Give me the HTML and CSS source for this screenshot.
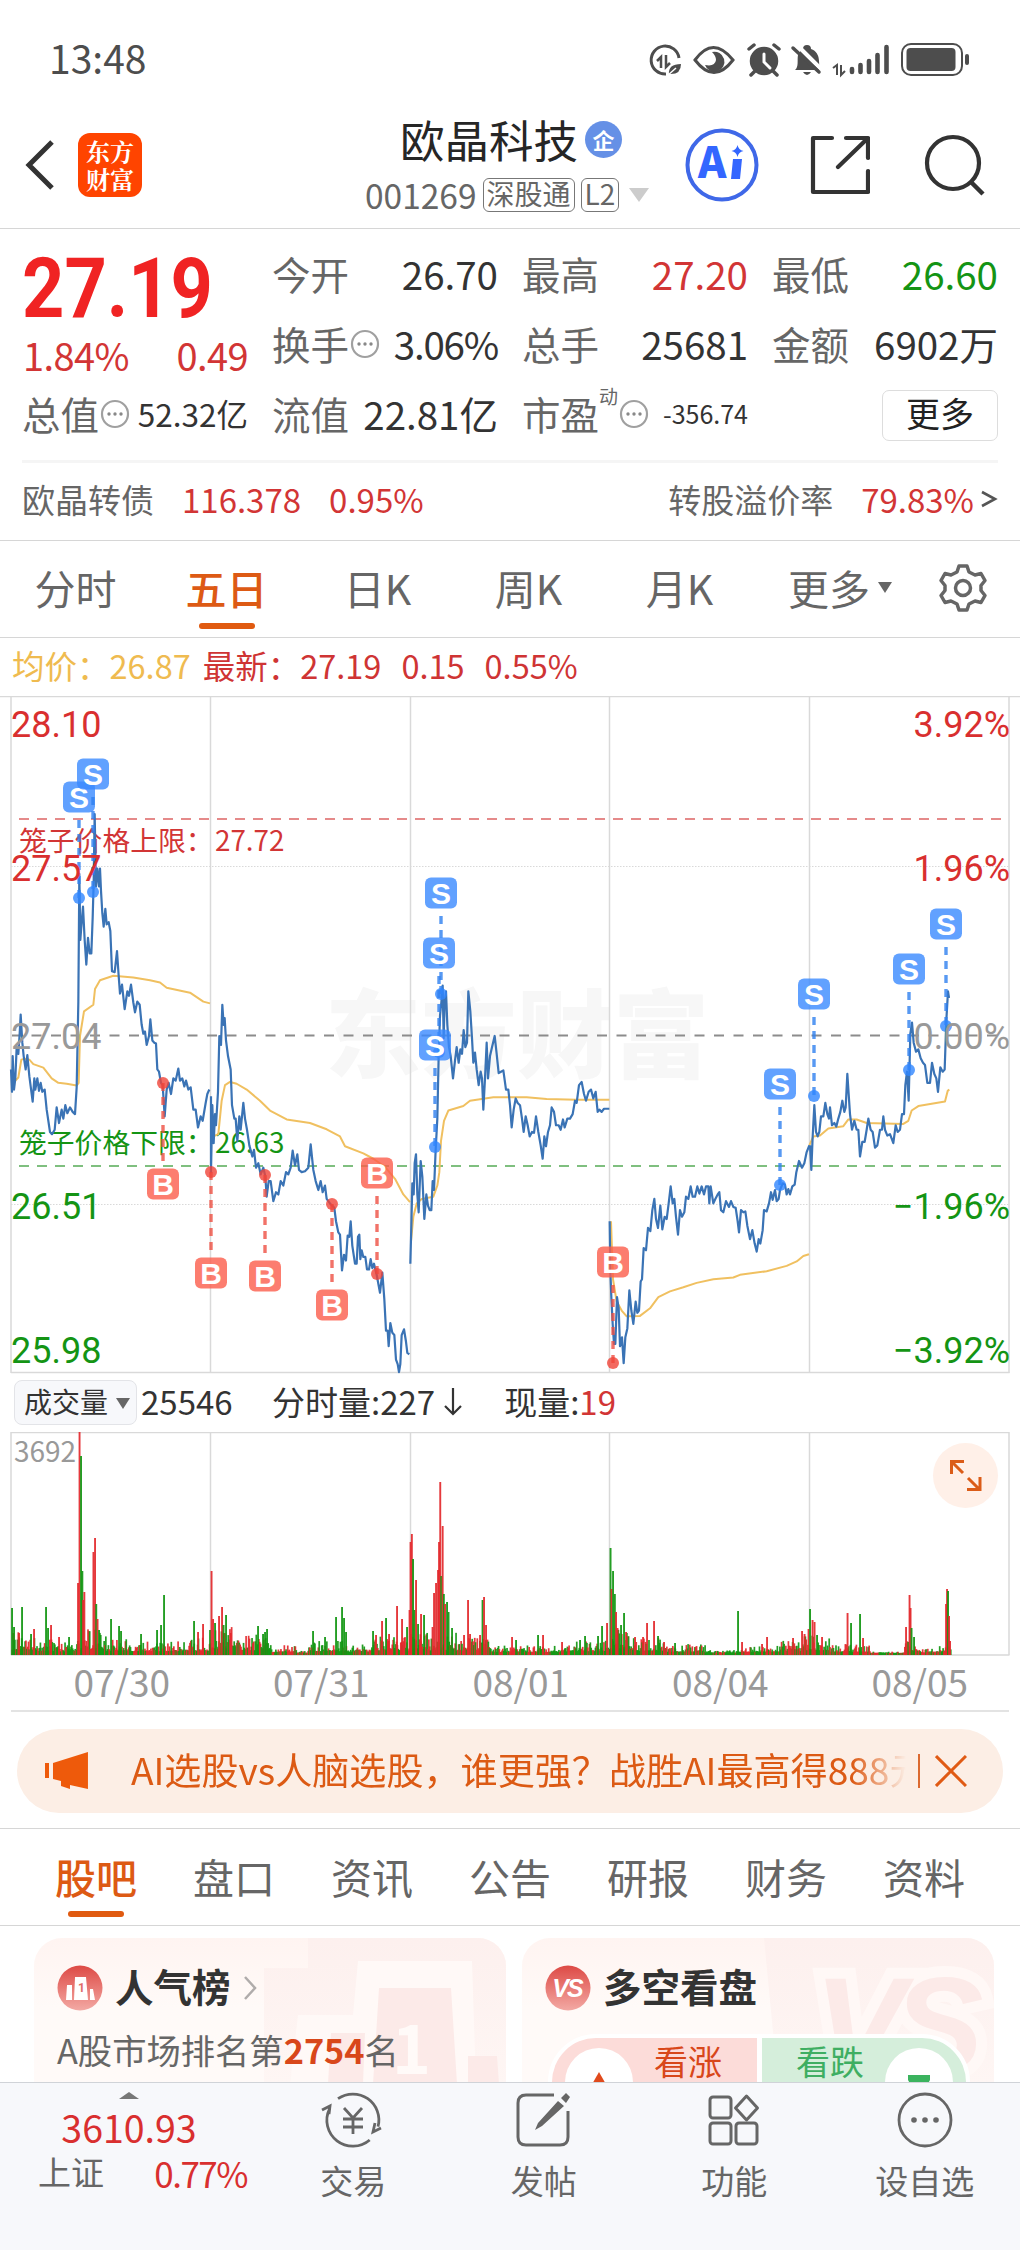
FILE: index.html
```html
<!DOCTYPE html>
<html lang="zh-CN">
<head>
<meta charset="UTF-8">
<meta name="viewport" content="width=device-width, initial-scale=1.0">
<title>欧晶科技 001269</title>
<link rel="stylesheet" href="styles.css">
</head>
<body>
<div class="status">
    <span class="clock">13:48</span>
    <svg class="status-icons" width="330" height="40" viewBox="0 0 330 40">
        <g fill="none" stroke="#4d4d4d" stroke-width="3">
            <path d="M37 18a14 14 0 1 0-13 16"/>
            <path d="M15 21l4-4v11M24 15v12l4-4" stroke-width="2.500"/>
            <path d="M53 20q18-25 38 0q-19 25-38 0z"/>
        </g>
        <path d="M27 34q-1-10 12-10q0 11-12 10z" fill="#4d4d4d"/>
        <path d="M25 36l9-8" stroke="#fff" stroke-width="1.500"/>
        <path d="M70 12a10 10 0 1 1-7 13q10 2 11-5q0-4-4-8z" fill="#4d4d4d"/>
        <g stroke="#4d4d4d" stroke-width="3.500" stroke-linecap="round">
            <circle cx="122" cy="21" r="12.500" fill="#4d4d4d"/>
            <path d="M107 9l5-4M132 5l5 4M113 31l-4 4M131 31l4 4"/>
            <path d="M122 14v8l6 6" stroke="#fff" fill="none" stroke-width="3"/>
        </g>
        <path d="M153 30c4-3 2-10 3-15a10 10 0 0 1 5-6a4 4 0 0 1 8 0c11 4 7 16 9 21zM161 32h8q-4 6-8 0z" fill="#4d4d4d"/>
        <path d="M153 3l28 28" stroke="#fff" stroke-width="4"/>
        <path d="M151 8l26 24" stroke="#4d4d4d" stroke-width="3.500" stroke-linecap="round"/>
        <path d="M191 28l4-3v10M199 25v10l4-4" fill="none" stroke="#4d4d4d" stroke-width="2"/>
        <g stroke="#4d4d4d" stroke-width="4.600" stroke-linecap="round">
            <path d="M210 29v3M218.500 25v7M227 21v11M235.500 15v17M244.500 7v25"/>
        </g>
        <rect x="260" y="4" width="60" height="31" rx="9" fill="none" stroke="#4d4d4d" stroke-width="2"/>
        <rect x="264.500" y="8" width="49" height="23" rx="4" fill="#4d4d4d"/>
        <rect x="323" y="14" width="4" height="11" rx="2" fill="#4d4d4d"/>
    </svg>
</div>

<header class="header">
    <svg class="back" width="30" height="52" viewBox="0 0 30 52"><path d="M27 3L4 26l23 23" fill="none" stroke="#333" stroke-width="5"/></svg>
    <div class="logo"><span>东方</span><span>财富</span></div>
    <div class="title">
        <div class="name">欧晶科技<span class="corp">企</span></div>
        <div class="code">001269<span class="tag">深股通</span><span class="tag">L2</span><i class="drop"></i></div>
    </div>
    <svg class="ai" width="74" height="74" viewBox="0 0 74 74">
        <circle cx="37" cy="37" r="34.500" fill="none" stroke="#3f68e8" stroke-width="4"/>
        <text x="13" y="50" class="ai-text">A</text>
        <path d="M48 31h9l-2 20h-9zM52.500 17q1 5 6 6q-5 1-6 6q-1-5-6-6q5-1 6-6z" fill="#3366ff"/>
    </svg>
    <svg class="share" width="60" height="60" viewBox="0 0 60 60"><path d="M22 3H3v54h55V36M36 3h22v20M57 4L28 32" fill="none" stroke="#333" stroke-width="4.200" stroke-linecap="round" stroke-linejoin="round"/></svg>
    <svg class="search" width="62" height="62" viewBox="0 0 62 62"><circle cx="29" cy="29" r="26" fill="none" stroke="#333" stroke-width="4.200"/><path d="M47 48l12 12" stroke="#333" stroke-width="4.500"/></svg>
</header>

<section class="quote">
    <div class="quote-top">
        <div class="last">
            <div class="price"><span>27.19</span></div>
            <div class="change"><span>1.84%</span><span>0.49</span></div>
        </div>
        <dl class="stats">
            <div><dt>今开</dt><dd>26.70</dd></div>
            <div><dt>最高</dt><dd class="up">27.20</dd></div>
            <div><dt>最低</dt><dd class="down">26.60</dd></div>
            <div><dt>换手<svg class="more-dot" width="30" height="30" viewBox="0 0 30 30"><circle cx="15" cy="15" r="13"/><path d="M9 15h.01M15 15h.01M21 15h.01"/></svg></dt><dd class="pct">3.06%</dd></div>
            <div><dt>总手</dt><dd>25681</dd></div>
            <div><dt>金额</dt><dd>6902万</dd></div>
        </dl>
    </div>
    <dl class="stats stats-row">
        <div><dt>总值<svg class="more-dot" width="30" height="30" viewBox="0 0 30 30"><circle cx="15" cy="15" r="13"/><path d="M9 15h.01M15 15h.01M21 15h.01"/></svg></dt><dd class="mid">52.32亿</dd></div>
        <div><dt>流值</dt><dd>22.81亿</dd></div>
        <div><dt>市盈<sup>动</sup><svg class="more-dot" width="30" height="30" viewBox="0 0 30 30"><circle cx="15" cy="15" r="13"/><path d="M9 15h.01M15 15h.01M21 15h.01"/></svg></dt><dd class="small">-356.74</dd></div>
        <div class="end"><button class="more">更多</button></div>
    </dl>
    <div class="bond">
        <span>欧晶转债</span><b>116.378</b><b>0.95%</b>
        <span class="premium">转股溢价率</span><b>79.83%</b>
        <svg width="18" height="24" viewBox="0 0 18 24"><path d="M2 5l13 7-13 7" fill="none" stroke="#555" stroke-width="2.600"/></svg>
    </div>
</section>

<nav class="periods">
    <span>分时</span><span class="on">五日</span><span>日K</span><span>周K</span><span>月K</span><span class="wide">更多<i></i></span>
    <svg width="50" height="50" viewBox="0 0 50 50"><g fill="none" stroke="#666" stroke-width="3.500" stroke-linejoin="round"><path d="M21 3h8l2 6 6 3 6-1.500 4 7-4 5v5l4 5-4 7-6-1.500-6 3-2 6h-8l-2-6-6-3-6 1.500-4-7 4-5v-5l-4-5 4-7 6 1.500 6-3z"/><circle cx="25" cy="25" r="7.500"/></g></svg>
</nav>

<div class="legend"><span class="avg">均价：</span><span class="avg v1">26.87</span><span class="v2">最新：</span><span class="v3">27.19</span><span class="v4">0.15</span><span>0.55%</span></div>

<svg class="chart" width="1020" height="678" viewBox="0 696 1020 678">
    <text x="517" y="1070" class="watermark">东方财富</text>
    <g class="frame">
        <path d="M0 696.500H1020M11 1372.500H1009.500"/>
        <path d="M11 697V1373M210.500 697V1373M410.500 697V1373M609.500 697V1373M809.500 697V1373M1009 697V1373"/>
        <path d="M11 866.500H1009M11 1204.500H1009" class="dotted"/>
    </g>
    <path d="M19 819H1002" stroke="#e58a8a" stroke-width="2" stroke-dasharray="10 8"/>
    <path d="M19 1166H1002" stroke="#7fbf7f" stroke-width="2" stroke-dasharray="10 8"/>
    <path d="M12 1035.500H1002" stroke="#8c8c8c" stroke-width="2" stroke-dasharray="10 9.500"/>
    <g class="cage">
        <text x="19" y="851" fill="#d23535">笼子价格上限：</text><text x="215" y="851" fill="#d23535">27.72</text>
        <text x="19" y="1153" fill="#149414">笼子价格下限：</text><text x="215" y="1153" fill="#149414">26.63</text>
    </g>
    <svg x="0" y="690" width="1020" height="700" viewBox="0 0 3060 1568" preserveAspectRatio="none">
        <g class="avg-line">
            <polyline points="45,876 55,868 64,828 75,826 88,828 100,838 130,846 155,870 175,880 200,882 230,886 236,880 240,775 252,720 280,705 285,670 300,650 340,640 400,644 450,650 480,655 500,667 570,678 610,698 630,702"/>
            <polyline points="640,1000 655,995 665,920 675,885 690,878 710,882 740,895 780,920 810,942 860,962 930,970 980,984 1020,1000 1035,1022 1090,1038 1120,1050 1155,1068 1185,1095 1210,1130 1230,1147"/>
            <polyline points="1233,1235 1240,1180 1250,1150 1265,1140 1300,1135 1312,1110 1318,1080 1323,1010 1332,965 1345,942 1390,932 1410,920 1480,912 1580,912 1640,916 1730,918 1828,918"/>
            <polyline points="1833,1190 1839,1320 1850,1370 1865,1390 1880,1403 1920,1402 1950,1385 1975,1360 2010,1347 2050,1338 2090,1328 2140,1320 2200,1316 2220,1310 2300,1302 2360,1290 2390,1280 2410,1268 2427,1264"/>
            <polyline points="2428,1020 2440,1000 2460,998 2485,982 2530,977 2545,962 2570,962 2600,970 2710,972 2725,965 2735,942 2755,932 2835,922 2843,898 2848,895"/>
        </g>
        <g class="price-line">
            <polyline points="33,850 36,900 38,820 42,895 46,870 50,800 55,815 59,770 62,727 67,790 71,820 77,850 82,818 88,865 98,922 103,870 106,895 112,870 117,898 122,880 127,900 134,895 140,940 150,990 156,995 164,985 170,935 177,970 185,940 190,960 196,930 202,948 210,935 218,945 225,950 230,890 235,700 238,412 241,560 245,520 249,485 254,560 259,615 264,555 269,590 274,590 278,510 281,430 284,278 288,440 292,400 297,440 300,400 303,450 307,500 311,530 316,490 320,525 326,520 331,540 336,630 344,632 351,585 356,640 360,680 366,660 374,715 382,675 387,685 393,660 400,700 405,722 412,698 419,705 425,750 430,770 435,765 440,795 447,775 451,738 457,785 463,790 468,792 472,850 477,855 483,880 488,885 494,955 500,895 506,880 513,905 520,870 527,875 535,848 540,875 547,870 553,888 558,875 565,895 572,890 580,940 587,940 594,980 602,955 608,965 617,925 622,905 628,895"/>
            <polyline points="633,910 633,1080 637,930 641,1015 645,950 648,975 654,900 658,775 663,795 667,705 671,750 674,735 678,785 684,820 692,850 696,930 703,960 707,960 712,1010 718,955 722,985 730,925 735,960 741,985 748,1020 757,1045 762,1030 768,1070 775,1060 782,1085 790,1070 796,1090 800,1135 806,1100 812,1100 820,1145 828,1125 835,1130 842,1100 850,1110 858,1080 865,1085 872,1070 878,1032 885,1065 892,1040 897,1075 905,1080 915,1078 925,1070 932,1018 940,1075 947,1100 955,1120 962,1100 968,1125 975,1110 980,1140 990,1150 996,1155 1003,1160 1008,1190 1015,1215 1020,1220 1026,1300 1032,1265 1038,1278 1043,1222 1048,1225 1052,1190 1057,1245 1065,1285 1070,1285 1074,1225 1078,1220 1081,1275 1085,1255 1090,1270 1096,1270 1101,1298 1107,1298 1112,1275 1117,1295 1122,1285 1130,1310 1140,1350 1147,1305 1153,1365 1158,1435 1163,1435 1166,1470 1171,1418 1177,1440 1183,1445 1188,1500 1193,1510 1197,1528 1201,1510 1205,1445 1212,1432 1218,1460 1222,1485 1228,1488"/>
            <polyline points="1231,1285 1234,1200 1237,1105 1241,1130 1244,1060 1248,1040 1252,1130 1256,1170 1262,1055 1267,1090 1273,1185 1279,1130 1284,1155 1289,1165 1294,1165 1298,1100 1302,1120 1307,1030 1312,960 1316,820 1320,730 1324,700 1328,662 1331,780 1334,700 1338,675 1342,750 1347,800 1352,820 1359,870 1365,830 1370,800 1376,835 1381,805 1386,815 1391,762 1396,800 1401,790 1405,675 1411,720 1416,780 1420,835 1425,812 1430,850 1436,885 1442,855 1446,870 1450,940 1455,870 1460,790 1464,870 1470,820 1476,800 1484,775 1490,815 1496,858 1503,855 1510,852 1518,895 1525,895 1530,930 1535,980 1541,940 1547,915 1553,925 1560,930 1566,960 1571,990 1577,955 1583,975 1589,1000 1596,990 1602,992 1608,955 1615,990 1622,1020 1628,1050 1633,1000 1638,1022 1644,990 1650,975 1655,935 1662,945 1668,975 1676,975 1682,985 1689,962 1694,980 1702,960 1710,960 1718,950 1725,920 1730,925 1737,885 1745,878 1752,905 1758,920 1766,900 1773,895 1780,915 1787,900 1793,945 1798,940 1805,945 1812,938 1828,938"/>
            <polyline points="1829,1190 1831,1300 1834,1360 1838,1420 1842,1465 1846,1465 1851,1360 1856,1385 1860,1470 1866,1450 1871,1508 1876,1450 1882,1430 1888,1345 1894,1390 1900,1420 1907,1370 1912,1395 1917,1390 1922,1325 1926,1320 1931,1250 1938,1255 1944,1205 1951,1212 1957,1165 1963,1140 1968,1185 1974,1205 1981,1155 1987,1208 1994,1180 2000,1185 2006,1150 2012,1112 2018,1150 2023,1140 2028,1180 2034,1220 2040,1165 2046,1180 2053,1170 2058,1135 2065,1140 2072,1112 2078,1135 2085,1135 2092,1112 2098,1128 2105,1112 2112,1130 2118,1112 2125,1112 2128,1150 2132,1112 2140,1150 2146,1140 2153,1130 2158,1125 2163,1165 2170,1170 2178,1145 2187,1158 2193,1145 2200,1158 2207,1160 2213,1190 2217,1215 2223,1165 2230,1170 2236,1168 2242,1200 2250,1230 2257,1210 2264,1240 2270,1258 2276,1230 2281,1240 2288,1210 2292,1165 2300,1168 2307,1150 2313,1125 2318,1142 2325,1120 2330,1145 2336,1140 2340,1120 2348,1105 2355,1108 2360,1130 2365,1118 2370,1130 2377,1112 2384,1108 2389,1080 2397,1055 2406,1070 2413,1060 2420,1035 2428,1020"/>
            <polyline points="2430,1020 2434,1075 2438,1000 2443,930 2448,990 2453,1000 2458,990 2463,955 2470,955 2476,925 2482,950 2487,960 2490,935 2496,975 2503,970 2509,978 2515,960 2521,945 2527,920 2533,945 2537,935 2542,860 2546,905 2550,950 2556,985 2563,965 2570,985 2575,985 2580,1045 2587,1012 2594,1012 2600,985 2605,960 2612,985 2618,990 2625,1025 2632,1020 2640,985 2646,985 2650,955 2655,985 2662,998 2670,995 2680,1015 2687,975 2693,990 2700,985 2706,950 2712,950 2716,885 2721,855 2726,920 2731,770 2736,745 2741,790 2748,810 2755,805 2762,825 2769,835 2775,840 2782,880 2790,880 2796,835 2803,860 2809,870 2814,900 2821,845 2828,855 2834,850 2839,740 2844,675 2847,690"/>
        </g>
    </svg>
    <g id="marks"></g>
    <g class="axis">
        <text x="11" y="737" class="red">28.10</text><text x="11" y="881" class="red">27.57</text><text x="11" y="1049" class="grey">27.04</text><text x="11" y="1219" class="green">26.51</text><text x="11" y="1363" class="green">25.98</text>
        <g text-anchor="end"><text x="1010" y="737" class="red">3.92%</text><text x="1010" y="881" class="red">1.96%</text><text x="1010" y="1049" class="grey">0.00%</text><text x="1010" y="1219" class="green">−1.96%</text><text x="1010" y="1363" class="green">−3.92%</text></g>
    </g>
</svg>

<div class="vol-head">
    <span class="vol-select">成交量<i></i></span><span class="total">25546</span><span class="minute">分时量:227</span>
    <svg width="20" height="30" viewBox="0 0 20 30"><path d="M10 1v26M2 19l8 8 8-8" fill="none" stroke="#333" stroke-width="2.200"/></svg>
    <span>现量:<em>19</em></span>
</div>
<svg class="volume" width="1020" height="224" viewBox="0 1432 1020 224">
    <g class="frame">
        <path d="M11 1432.500H1009M11 1655H1009.500"/>
        <path d="M11 1432V1655M210.500 1432V1655M410.500 1432V1655M609.500 1432V1655M809.500 1432V1655M1009 1432V1655"/>
    </g>
    <text x="14" y="1462" class="max">3692</text>
    <g id="bars"></g>
    <circle cx="965.500" cy="1475.500" r="32.500" fill="#fff0e8"/>
    <path d="M963 1473l-11.500-11.500M951.500 1474v-12.500h12.500M968 1478l11.500 11.500M980 1477v12.500h-13" fill="none" stroke="#db5c18" stroke-width="3"/>
</svg>
<div class="dates"><span>07/30</span><span>07/31</span><span>08/01</span><span>08/04</span><span>08/05</span></div>

<div class="notice">
    <svg width="44" height="40" viewBox="0 0 44 40"><path d="M0 12h4v15H0zM8 12L43 1v37l-18-4v4l-9-3v-5l-8-2z" fill="#ee5a0b"/></svg>
    <div class="notice-text">AI选股vs人脑选股，谁更强？战胜AI最高得888元</div>
    <i></i>
    <svg class="close" width="32" height="32" viewBox="0 0 32 32"><path d="M1 1l30 30M31 1L1 31" stroke="#e05a14" stroke-width="3"/></svg>
</div>

<nav class="tabs"><span class="on">股吧</span><span>盘口</span><span>资讯</span><span>公告</span><span>研报</span><span>财务</span><span>资料</span></nav>

<div class="cards">
    <div class="card">
        <svg class="card-bg" width="472" height="146" viewBox="0 0 472 146">
            <defs><linearGradient id="shade" gradientUnits="userSpaceOnUse" x1="0" y1="0" x2="0" y2="146"><stop offset="0" stop-color="#fdf0ee"/><stop offset="1" stop-color="#fef6f4"/></linearGradient></defs>
            <path d="M230 30h44V0h198v146H230z" fill="url(#shade)"/>
            <path d="M264 77h55l5-54h114l4 123H256z" fill="#fff9f7"/>
            <path d="M345 50h72l6 96H339zM297 95h34l-2 51h-35zM434 118h29l2 28h-31z" fill="#fceae8"/>
            <text x="358" y="136" class="card-one">1</text>
        </svg>
        <h2>
            <svg width="46" height="46" viewBox="0 0 46 46"><defs><linearGradient id="red" x1="0" y1="0" x2="0" y2="1"><stop offset="0" stop-color="#dd4a45"/><stop offset="1" stop-color="#f3a9a4"/></linearGradient></defs><circle cx="23" cy="23" r="22.500" fill="url(#red)"/><path d="M10 20h5v15H9zM18 12h11l2 23H17zM33 24h3l2 11h-5z" fill="#fff"/><text x="21" y="27" class="icon-one">1</text></svg>
            <span>人气榜</span>
            <svg class="chev" width="14" height="24" viewBox="0 0 14 24"><path d="M2 1l10 11L2 23" fill="none" stroke="#b0acab" stroke-width="2.500"/></svg>
        </h2>
        <p>A股市场排名第<b>2754</b>名</p>
    </div>
    <div class="card">
        <svg class="card-bg" width="472" height="146" viewBox="0 0 472 146">
            <path d="M242 0h230v146H256z" fill="url(#shade)"/>
            <text x="292" y="134" class="vs-outline">VS</text>
        </svg>
        <h2>
            <svg width="46" height="46" viewBox="0 0 46 46"><circle cx="23" cy="23" r="22.500" fill="url(#red)"/><text x="22" y="32" class="vs">VS</text></svg>
            <span>多空看盘</span>
        </h2>
        <div class="vote">
            <div class="bull"><svg width="68" height="68" viewBox="0 0 68 68"><circle cx="34" cy="34" r="34" fill="#fff"/><path d="M34 24l16 28H18z" fill="#e04a1c"/></svg><span>看涨</span></div>
            <div class="bear"><span>看跌</span><svg width="68" height="68" viewBox="0 0 68 68"><circle cx="34" cy="34" r="34" fill="#fff"/><path d="M23 27h22v5L34 52 23 32z" fill="#3bb35e"/></svg></div>
        </div>
    </div>
</div>

<footer class="bottom">
    <div class="index"><i></i><strong>3610.93</strong><div><span>上证</span><em>0.77%</em></div></div>
    <div class="item">
        <svg width="66" height="60" viewBox="0 0 66 60"><g fill="none" stroke="#666" stroke-width="2.800"><path d="M18 8.700A26 26 0 0 1 58 36.700M61 38l-8 4 2-9M49.700 50A26 26 0 0 1 9.400 19M2 20l8-4-1 8"/><path d="M24 18l9 10 9-10M23 29h20M23 37h20M33 28v16"/></g></svg><span>交易</span>
    </div>
    <div class="item">
        <svg width="60" height="60" viewBox="0 0 60 60"><path d="M40 5H12q-8 0-8 8v34q0 8 8 8h34q8 0 8-8V21" fill="none" stroke="#666" stroke-width="3"/><path d="M44 11l6 5L28 36l-7 4 3-7zM47 8l5-5 4 4-4 6z" fill="#666"/></svg><span>发帖</span>
    </div>
    <div class="item">
        <svg width="60" height="60" viewBox="0 0 60 60"><g fill="none" stroke="#666" stroke-width="3"><rect x="6" y="7" width="21" height="21" rx="3"/><rect x="6" y="33" width="21" height="21" rx="3"/><rect x="32" y="33" width="21" height="21" rx="3"/><path d="M42.500 6l11 12-11 12-11-12z" stroke-linejoin="round"/></g></svg><span>功能</span>
    </div>
    <div class="item">
        <svg width="60" height="60" viewBox="0 0 60 60"><circle cx="30" cy="30" r="26" fill="none" stroke="#666" stroke-width="2.800"/><g fill="#666"><circle cx="19" cy="30" r="2.800"/><circle cx="30" cy="30" r="2.800"/><circle cx="41" cy="30" r="2.800"/></g></svg><span>设自选</span>
    </div>
</footer>
<script src="script.js"></script>
</body>
</html>
```
FILE: styles.css
```css
* {
    box-sizing: border-box;
}
body {
    margin: 0;
    width: 1020px;
    height: 2250px;
    overflow: hidden;
    background: #fff;
    color: #333;
    font-family: "Noto Sans CJK SC", sans-serif;
    line-height: 1;
}
i, em {
    font-style: normal;
}
dl, dd, h2, p {
    margin: 0;
}
.status {
    display: flex;
    justify-content: space-between;
    align-items: center;
    height: 120px;
    padding: 0 48px 0 49px;
}
.clock {
    padding-bottom: 5px;
    font-size: 39px;
    color: #4d4d4d;
}
.header {
    display: flex;
    align-items: center;
    height: 109px;
    padding-bottom: 18px;
    border-bottom: 1px solid #d6d6d6;
}
.back {
    margin-left: 25px;
}
.logo {
    display: flex;
    flex-direction: column;
    justify-content: center;
    align-items: center;
    gap: 2px;
    width: 64px;
    height: 64px;
    margin-left: 23px;
    border-radius: 12px;
    background: #ff4400;
    color: #fff;
    font: bold 24px/26px "Noto Serif CJK SC", "Noto Sans CJK SC", serif;
}
.title {
    width: 288px;
    margin: 4px 32px 0 223px;
    white-space: nowrap;
}
.name {
    display: flex;
    align-items: center;
    height: 52px;
    padding-left: 35px;
    font-size: 44.500px;
    color: #262626;
}
.corp {
    width: 37px;
    height: 37px;
    margin-left: 7px;
    border-radius: 50%;
    background: #6590e6;
    color: #fff;
    font-size: 22px;
    font-weight: bold;
    line-height: 36px;
    text-align: center;
}
.code {
    display: flex;
    align-items: center;
    height: 56px;
    padding-top: 3px;
    font-size: 33.500px;
    color: #666;
}
.tag {
    flex: none;
    height: 34px;
    margin-left: 6px;
    padding: 0 3px;
    border: 1px solid #777;
    border-radius: 6px;
    font-size: 28px;
    line-height: 29px;
}
.drop {
    margin-left: 10px;
    border: 10px solid transparent;
    border-top: 14px solid #ccc;
    border-bottom: 0;
}
.ai-text {
    font: 900 43px "Noto Sans CJK SC", sans-serif;
    fill: #3366ff;
}
.share {
    margin-left: 51px;
}
.search {
    margin-left: 54px;
}
.quote {
    height: 312px;
    padding: 12px 22px 0;
    border-bottom: 1px solid #d6d6d6;
}
.quote-top {
    display: flex;
    height: 140px;
    gap: 24px;
}
.last {
    width: 227px;
}
.price {
    height: 92px;
    font: bold 83px/95px Roboto, sans-serif;
    color: #f02323;
    white-space: nowrap;
}
.price span {
    display: inline-block;
    transform: scaleX(.89);
    transform-origin: 0 50%;
}
.change {
    display: flex;
    justify-content: space-between;
    padding: 3px 0 0 1px;
    font-size: 38px;
    color: #d23535;
    letter-spacing: -.6px;
}
.stats {
    flex: 1;
    display: grid;
    grid-template-columns: repeat(3, 226px);
    grid-auto-rows: 70px;
    column-gap: 24px;
}
.stats-row {
    grid-template-columns: repeat(4, 226px);
}
.stats > div {
    display: flex;
    justify-content: space-between;
    align-items: center;
    padding-bottom: 5px;
    white-space: nowrap;
    font-size: 38.500px;
}
.stats dt {
    display: flex;
    align-items: center;
    color: #666;
}
.stats .mid {
    font-size: 31.500px;
}
.stats .pct {
    letter-spacing: -1.200px;
}
.stats .small {
    font-size: 25px;
}
.stats sup {
    align-self: flex-start;
    margin-top: -8px;
    font-size: 19px;
}
.stats .end {
    justify-content: flex-end;
    padding: 0;
}
.up {
    color: #d23535;
}
.down {
    color: #149414;
}
.more-dot {
    margin-left: 1px;
    fill: none;
    stroke: #a0a0a0;
    stroke-width: 2.200;
}
.more-dot path {
    stroke: #888;
    stroke-width: 3.400;
    stroke-linecap: round;
}
.more {
    width: 116px;
    height: 51px;
    margin-bottom: 2px;
    padding: 0 0 4px;
    border: 1px solid #ddd;
    border-radius: 7px;
    background: #fff;
    color: #222;
    font: 34px/1 "Noto Sans CJK SC", sans-serif;
}
.bond {
    display: flex;
    align-items: center;
    height: 78px;
    margin-top: 9px;
    padding-bottom: 3px;
    border-top: 3px solid #f5f5f5;
    font-size: 33px;
    color: #666;
}
.bond b {
    margin-left: 28px;
    font-weight: normal;
    color: #d23535;
}
.bond .premium {
    margin-left: auto;
}
.bond svg {
    margin-left: 6px;
}
.periods {
    display: grid;
    grid-template-columns: repeat(6, 151px) 114px;
    justify-items: center;
    align-items: center;
    height: 97px;
    padding-bottom: 3px;
    border-bottom: 1px solid #d6d6d6;
    font-size: 41px;
    color: #666;
}
.periods .wide {
    justify-self: end;
    padding-right: 14px;
}
.periods span,
.tabs span {
    position: relative;
}
.periods .on,
.tabs .on {
    color: #dd5a14;
    font-weight: 500;
}
.periods .on::after,
.tabs .on::after {
    content: "";
    position: absolute;
    left: 50%;
    bottom: -20px;
    width: 56px;
    height: 6px;
    margin-left: -28px;
    border-radius: 3px;
    background: #e05a10;
}
.periods .on::after {
    bottom: -21px;
}
.periods i {
    display: inline-block;
    margin-left: 8px;
    border: 7px solid transparent;
    border-top: 11px solid #666;
    border-bottom: 0;
    vertical-align: 12px;
}
.legend {
    display: flex;
    align-items: center;
    height: 58px;
    padding: 0 0 3px 12px;
    font-size: 32.500px;
    color: #cf3434;
}
.legend .avg {
    color: #efbb50;
}
.v1 {
    margin-right: 12px;
}
.v3, .v4 {
    margin-right: 20px;
}
.chart, .volume {
    display: block;
}
.frame path {
    fill: none;
    stroke: #d9d9d9;
    stroke-width: 1.500;
}
.frame .dotted {
    stroke-dasharray: 1.500 1.500;
    stroke-width: 1;
}
.watermark {
    font-size: 96px;
    font-weight: 900;
    fill: #f7f7f7;
    text-anchor: middle;
}
.cage {
    font-size: 27.800px;
}
.axis text {
    font: 36px Roboto, sans-serif;
}
.red {
    fill: #d92f2f;
}
.grey {
    fill: #999;
}
.green {
    fill: #149414;
}
.avg-line polyline,
.price-line polyline {
    fill: none;
    stroke: #f0c060;
    stroke-width: 2;
    stroke-linejoin: round;
    vector-effect: non-scaling-stroke;
}
.price-line polyline {
    stroke: #3a73b5;
    stroke-width: 2.200;
}
.mark-letter {
    font: bold 30px "Liberation Sans", sans-serif;
    fill: #fff;
    text-anchor: middle;
}
.vol-head {
    display: flex;
    align-items: center;
    height: 58px;
    padding: 0 0 2px 14px;
    font-size: 33px;
}
.vol-head > span {
    line-height: 38px;
    padding-bottom: 2px;
}
.vol-head .vol-select {
    width: 123px;
    height: 45px;
    margin-right: 4px;
    padding-left: 9px;
    border: 1px solid #e3e4e8;
    border-radius: 8px;
    background: #f7f8fb;
    font-size: 28px;
    line-height: 40px;
}
.vol-select i {
    display: inline-block;
    margin-left: 8px;
    border: 7px solid transparent;
    border-top: 11px solid #666;
    border-bottom: 0;
    vertical-align: 4px;
}
.total {
    width: 131px;
}
.vol-head svg {
    margin: 0 41px 0 8px;
}
.vol-head em {
    color: #d23535;
}
.max {
    font-size: 28px;
    fill: #999;
}
.dates {
    display: grid;
    grid-template-columns: repeat(5, 199.500px);
    height: 56px;
    margin: 0 11px;
    border-bottom: 2px solid #e3e3e3;
    padding-left: 11px;
    font-size: 37px;
    line-height: 51px;
    text-align: center;
    color: #999;
}
.notice {
    display: flex;
    align-items: center;
    height: 84px;
    margin: 17px 17px 15px;
    padding: 0 36px 0 28px;
    border-radius: 42px;
    background: #fceee5;
    color: #dc5a14;
}
.notice-text {
    width: 776px;
    margin: 0 0 4px 42px;
    overflow: hidden;
    white-space: nowrap;
    font-size: 37.100px;
    line-height: 56px;
    -webkit-mask-image: linear-gradient(90deg, #000 93%, transparent);
    mask-image: linear-gradient(90deg, #000 93%, transparent);
}
.notice i {
    width: 2px;
    height: 34px;
    margin: 0 15px 0 12px;
    background: #dc6a30;
}
.tabs {
    display: grid;
    grid-template-columns: repeat(7, 138px);
    justify-items: center;
    align-items: center;
    height: 98px;
    padding: 0 0 1px 27px;
    border-top: 1px solid #d6d6d6;
    border-bottom: 1px solid #d6d6d6;
    font-size: 41px;
    color: #666;
}
.cards {
    display: flex;
    gap: 16px;
    height: 156px;
    padding: 12px 26px 0 34px;
    overflow: hidden;
}
.card {
    position: relative;
    width: 472px;
    height: 200px;
    padding: 27px 23px;
    border-radius: 28px;
    overflow: hidden;
    background: linear-gradient(#fff4f1, #fffaf8 70px);
}
.card-bg {
    position: absolute;
    left: 0;
    top: 0;
}
.card h2 {
    position: relative;
    display: flex;
    align-items: center;
    height: 46px;
    gap: 12px;
    font-size: 38.500px;
    font-weight: bold;
}
.card h2 span {
    padding-bottom: 5px;
}
.card p {
    position: relative;
    margin-top: 21px;
    font-size: 34.300px;
    color: #666;
}
.card p b {
    color: #d8471a;
}
.card-one {
    font: bold 66px "Noto Sans CJK SC", sans-serif;
    fill: #fffaf8;
}
.icon-one {
    font: bold 12px Roboto, sans-serif;
    fill: #df6c68;
}
.vs {
    font: italic bold 25px "Liberation Sans", sans-serif;
    letter-spacing: -2px;
    text-anchor: middle;
    fill: #fff;
}
.vs-outline {
    font: italic bold 136px "Liberation Sans", sans-serif;
    letter-spacing: -12px;
    fill: #fceae8;
    stroke: #fff8f6;
    stroke-width: 22px;
    paint-order: stroke;
}
.vote {
    position: relative;
    display: flex;
    gap: 5px;
    width: 422px;
    height: 96px;
    margin: 23px 0 0 3px;
    border: 4px solid #fff;
    border-radius: 48px;
    overflow: hidden;
    background: #fff;
    font-size: 34px;
}
.vote div {
    display: flex;
    flex: 1;
    gap: 21px;
    padding: 10px 13px 0;
}
.vote span {
    margin-top: -4px;
}
.bull {
    background: #fcdcd9;
    color: #d8471a;
}
.bear {
    justify-content: flex-end;
    background: #d5eedb;
    color: #3fae62;
}
.bottom {
    position: relative;
    display: grid;
    grid-template-columns: 258px repeat(4, 190.500px);
    height: 168px;
    border-top: 1px solid #d0d3d8;
    background: #f7f8fb;
    font-size: 33px;
    color: #666;
}
.index {
    text-align: center;
}
.index i {
    display: block;
    width: 20px;
    margin: 9px auto 0;
    border: 10px solid transparent;
    border-bottom: 7px solid #777;
    border-top: 0;
}
.index strong {
    display: block;
    margin-top: 9px;
    font-size: 37.500px;
    font-weight: normal;
    color: #d92f2f;
}
.index div {
    display: flex;
    justify-content: space-between;
    margin-top: 9px;
    padding: 0 11px 0 38px;
}
.index em {
    font-size: 35px;
    letter-spacing: -1.500px;
    color: #d92f2f;
}
.item {
    display: flex;
    flex-direction: column;
    align-items: center;
    gap: 14px;
    padding-top: 7px;
}
```
FILE: script.js
```js
const NS = "http://www.w3.org/2000/svg";

function add(parent, tag, attrs, text) {
    const el = document.createElementNS(NS, tag);
    for (const key in attrs) el.setAttribute(key, attrs[key]);
    if (text) el.textContent = text;
    parent.appendChild(el);
}

// [type, x, badge y, dot y]
const trades = [
    ["S", 79, 797, 898], ["S", 93, 774, 892], ["S", 441, 893, 994], ["S", 439, 953, 1052], ["S", 435, 1045, 1147],
    ["S", 780, 1084, 1185], ["S", 814, 994, 1096], ["S", 909, 969, 1070], ["S", 946, 924, 1026],
    ["B", 163, 1184, 1083], ["B", 211, 1273, 1172], ["B", 265, 1276, 1175], ["B", 332, 1305, 1204],
    ["B", 377, 1173, 1274], ["B", 613, 1262, 1363]
];
const marks = document.getElementById("marks");
for (const [type, x, y, dot] of trades) {
    const sell = type === "S";
    const start = dot > y ? y + 23 : y - 23;
    add(marks, "path", { d: `M${x} ${start}V${dot}`, stroke: sell ? "#2f80f0" : "#ee5043", "stroke-width": 3.4, "stroke-dasharray": "8 6", opacity: .8 });
    add(marks, "circle", { cx: x, cy: dot, r: 6, fill: sell ? "#2f86ff" : "#f04438", opacity: .8 });
    add(marks, "rect", { x: x - 16, y: y - 15.5, width: 32, height: 31, rx: 6, fill: sell ? "#3a8aff" : "#fb5c4b", opacity: .8 });
    add(marks, "text", { x: x, y: y + 10.5, class: "mark-letter" }, type);
}

// peaks: [x, height, colour]
const peaks = [
    [12, 47, "g"], [14, 28, "g"], [19, 22, "r"], [22, 48, "g"], [34, 26, "r"], [31, 21, "g"], [46, 48, "g"], [48, 27, "g"], [51, 30, "r"], [59, 18, "r"], [69, 18, "g"],
    [78, 72, "r"], [79.5, 223, "r"], [81, 199, "g"], [82.3, 84, "g"], [83, 55, "r"], [84.3, 63, "r"], [93.4, 103, "r"], [95, 117, "r"], [96.2, 51, "g"], [97.5, 36, "r"], [99, 25, "g"],
    [111, 36, "g"], [119, 29, "g"], [121, 24, "g"], [141, 21, "g"], [157, 25, "g"], [161, 30, "g"], [164, 60, "g"], [194, 34, "g"], [198, 23, "r"], [203, 31, "r"],
    [210, 25, "g"], [211.5, 84, "r"], [213, 36, "r"], [215, 32, "g"], [219, 39, "r"], [222, 48, "r"], [223.5, 30, "g"], [226, 40, "g"], [258, 29, "g"], [263, 21, "g"], [265, 23, "g"], [267, 26, "g"],
    [313, 24, "g"], [325, 18, "g"], [336, 38, "g"], [342, 48, "g"], [344, 37, "g"], [346, 23, "g"], [373, 24, "g"], [376, 20, "r"], [382, 34, "r"], [386, 37, "g"], [389, 21, "r"], [397, 49, "r"], [402, 36, "r"], [407, 28, "g"],
    [409.5, 45, "r"], [410.5, 113, "r"], [411.8, 121, "r"], [413, 96, "g"], [414.5, 45, "g"], [416, 75, "r"], [418, 31, "g"], [421, 41, "r"], [424, 40, "g"],
    [432.5, 28, "r"], [434, 62, "r"], [436, 72, "r"], [438, 85, "r"], [439, 113, "r"], [440.2, 173, "r"], [441.2, 79, "g"], [442.6, 129, "r"], [443.8, 61, "g"], [445, 51, "r"], [447, 53, "g"], [448.5, 43, "g"], [452, 27, "g"],
    [464, 20, "r"], [468, 55, "r"], [470, 21, "r"], [480, 20, "r"], [482.5, 55, "g"], [484, 58, "r"], [486, 30, "r"], [512, 18, "r"], [516, 15, "g"], [538, 20, "g"], [543, 20, "r"], [562, 13, "r"],
    [580, 15, "g"], [585, 19, "g"], [598, 19, "g"], [602, 29, "g"], [607, 32, "r"], [610.5, 107, "g"], [611.5, 66, "r"], [613, 84, "g"], [614.8, 61, "g"], [616, 43, "r"], [617.5, 27, "r"], [621, 30, "g"], [624, 42, "g"], [626, 23, "r"],
    [635, 18, "r"], [643, 18, "r"], [647, 32, "r"], [654, 34, "r"], [658, 19, "g"], [664, 13, "r"], [675, 12, "g"], [738, 44, "g"], [742, 13, "r"], [762, 11, "r"], [767, 18, "r"], [793, 17, "r"],
    [802, 24, "r"], [804.5, 21, "r"], [808.5, 26, "r"], [810, 46, "g"], [812.5, 35, "r"], [814.5, 33, "r"], [817, 20, "g"], [822, 18, "r"], [847.5, 42, "r"], [851, 32, "g"], [860, 41, "g"], [863, 17, "r"],
    [906, 28, "r"], [909.5, 60, "r"], [910.5, 47, "r"], [911.5, 27, "g"], [914, 18, "g"], [946, 51, "r"], [947, 66, "r"], [948, 64, "g"], [949, 39, "r"], [950, 14, "r"]
];
// quiet stretches between the peaks: [from x, average height]
const levels = [[11, 14], [36, 9], [52, 7], [74, 11], [84, 16], [105, 9], [126, 8], [186, 10], [211, 18], [237, 12], [270, 3], [283, 6], [296, 2], [308, 8], [346, 6], [370, 11], [408, 16], [428, 10], [446, 18], [456, 10], [490, 5], [545, 5], [570, 8], [606, 16], [630, 10], [665, 6], [705, 2], [745, 5], [780, 8], [802, 12], [830, 6], [870, 1], [904, 8], [920, 3], [936, 6]];
const colors = { r: "#e3282b", g: "#119611" };
const bars = document.getElementById("bars");
let seed = 37;
function rand() {
    seed = (seed * 16807) % 2147483647;
    return seed / 2147483647;
}
for (let x = 11.5; x < 950; x += .85) {
    let level = 5;
    for (const [from, value] of levels) if (x >= from) level = value;
    const h = 1.8 + level * (.25 + Math.pow(rand(), 2) * 1.3);
    add(bars, "rect", { x: x, y: 1655 - h, width: 1.7, height: h, fill: rand() > .5 ? colors.r : colors.g, opacity: .92 });
}
for (const [x, h, c] of peaks) {
    add(bars, "rect", { x: x - .9, y: 1655 - h, width: 1.9, height: h, fill: colors[c], opacity: .92 });
}
```
